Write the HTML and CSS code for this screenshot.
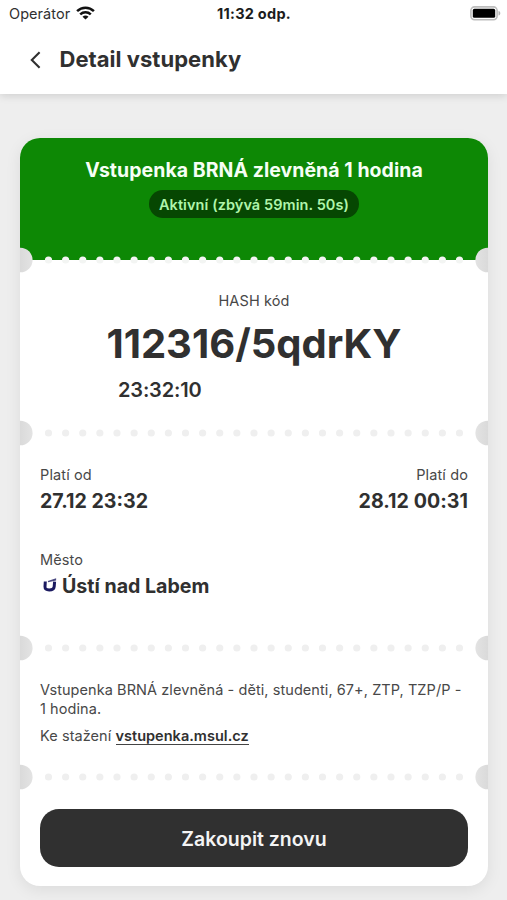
FILE: index.html
```html
<!DOCTYPE html>
<html lang="cs">
<head>
<meta charset="utf-8">
<title>Detail vstupenky</title>
<link rel="stylesheet" href="styles.css">
</head>
<body>
<svg class="defs" width="0" height="0" aria-hidden="true">
  <defs>
    <linearGradient id="shadeLeft"><stop offset="0.5" stop-color="#dadada"/><stop offset="1" stop-color="#e3e3e3"/></linearGradient>
    <linearGradient id="shadeRight"><stop offset="0" stop-color="#e3e3e3"/><stop offset="0.5" stop-color="#dadada"/></linearGradient>
    <symbol id="perforation" viewBox="0 0 468 26">
      <circle cx="0.3" cy="13" r="12.3" fill="url(#shadeLeft)"/>
      <circle cx="467.7" cy="13" r="12.3" fill="url(#shadeRight)"/>
      <path d="M28.500 13H440.500" fill="none" stroke="currentColor" stroke-width="7.2" stroke-linecap="round" stroke-dasharray="0 17.125"/>
    </symbol>
  </defs>
</svg>
<header class="top">
  <div class="status">
    <div class="carrier"><span>Operátor</span>
      <svg width="19" height="14" viewBox="0 0 19 14" fill="none" stroke="#111" stroke-width="2.5"><path d="M1.1 5.1C5.8.5 13.2.5 17.9 5.1"/><path d="M4.2 8.3c3-2.8 7.6-2.8 10.6 0"/><path d="M9.5 13.6 6.5 10.7c1.7-1.5 4.3-1.5 6 0z" fill="#111" stroke="none"/></svg>
    </div>
    <div class="clock">11:32 odp.</div>
    <svg class="battery" width="31" height="15" viewBox="0 0 31 15"><rect x=".9" y=".9" width="26.2" height="12.8" rx="3.6" fill="#fff" stroke="#bdbdbd" stroke-width="1.6"/><rect x="2.8" y="2.8" width="22.4" height="9" rx="1.6"/><path d="M28.5 5c2.4.5 2.4 4.1 0 4.6z" fill="#b4b4b4"/></svg>
  </div>
  <div class="titlebar">
    <svg width="12" height="18" viewBox="0 0 12 18" fill="none" stroke="#303030" stroke-width="2.1"><path d="M10.6 1.2 2.8 9l7.8 7.8"/></svg>
    <h1>Detail vstupenky</h1>
  </div>
</header>
<main>
  <article class="ticket">
    <section class="head">
      <h2>Vstupenka BRNÁ zlevněná 1 hodina</h2>
      <div class="badge">Aktivní (zbývá 59min. 50s)</div>
    </section>
    <section class="code">
      <svg class="perf perf-head"><use href="#perforation"/></svg>
      <div class="label hash-label">HASH kód</div>
      <div class="hash">112316/5qdrKY</div>
      <div class="time">23:32:10</div>
    </section>
    <section class="validity">
      <svg class="perf"><use href="#perforation"/></svg>
      <div class="range">
        <div><div class="label">Platí od</div><div class="value">27.12 23:32</div></div>
        <div class="right"><div class="label">Platí do</div><div class="value until">28.12 00:31</div></div>
      </div>
      <div class="label city-label">Město</div>
      <div class="city">
        <svg width="15" height="16" viewBox="0 0 15 16"><path d="M2.3 4.5 2 9.6C1.9 12 3.2 12.9 6.2 12.9S11 12 11.2 9.6L11.6 4.6" fill="none" stroke="#1b1a60" stroke-width="3"/><path d="M4.8 3.9 13.1 1.3V3.6L5.2 5.3z" fill="#4a4980"/></svg>
        <span class="value">Ústí nad Labem</span>
      </div>
    </section>
    <section class="info">
      <svg class="perf"><use href="#perforation"/></svg>
      <p class="desc">Vstupenka BRNÁ zlevněná - děti, studenti, 67+, ZTP, TZP/P -<br>1 hodina.</p>
      <p class="download">Ke stažení <a>vstupenka.msul.cz</a></p>
    </section>
    <section class="action">
      <svg class="perf"><use href="#perforation"/></svg>
      <button>Zakoupit znovu</button>
    </section>
  </article>
</main>
</body>
</html>
```
FILE: styles.css
```css
* { box-sizing: border-box; }
body {
  margin: 0;
  height: 900px;
  overflow: hidden;
  background: #eee;
  color: #303030;
  font-family: Inter, "Liberation Sans", sans-serif;
}
h1, h2, p { margin: 0; }
.defs { position: absolute; }
.top {
  height: 94px;
  background: #fff;
  box-shadow: 0 2px 8px rgba(0, 0, 0, .13);
}
.status {
  display: grid;
  grid-template-columns: 1fr auto 1fr;
  height: 28px;
  padding: 0 6px 0 9px;
  align-items: center;
  font-size: 14.5px;
}
.carrier { display: flex; gap: 6px; align-items: center; position: relative; top: -1px; letter-spacing: .05px; }
.clock { font-weight: 700; color: #1c1c1c; letter-spacing: .25px; position: relative; top: -.5px; left: -1px; }
.battery { justify-self: end; margin-top: -1px; }
.titlebar { display: flex; align-items: center; height: 62px; padding-left: 29px; gap: 18.5px; }
.titlebar svg { margin-top: 2px; }
h1 { font-size: 22px; line-height: 28px; font-weight: 700; letter-spacing: .03px; }
main { padding: 44px 19px 0 20px; }
.ticket {
  border-radius: 20px;
  background: #fff;
  box-shadow: 0 4px 16px rgba(0, 0, 0, .08);
}
.ticket section { position: relative; padding: 0 20px; }
.perf {
  position: absolute;
  left: 0;
  top: -13px;
  width: 468px;
  height: 26px;
  color: #efefef;
}
.perf-head { color: #f3f5f3; }
.head {
  height: 122px;
  background: #0d8805;
  border-radius: 20px 20px 0 0;
  display: flex;
  flex-direction: column;
  align-items: center;
}
h2 { margin-top: 20px; font-size: 19.5px; line-height: 24px; font-weight: 700; letter-spacing: .04px; color: #f6fff5; white-space: nowrap; }
.badge {
  margin-top: 8px;
  height: 28px;
  width: 210px;
  border-radius: 14px;
  background: #064702;
  color: #b0f5ab;
  font-size: 14.5px;
  line-height: 29px;
  font-weight: 600;
  letter-spacing: .08px;
  text-align: center;
  white-space: nowrap;
}
.code { height: 173px; }
.label { font-size: 14.5px; line-height: 20px; letter-spacing: .12px; color: #484848; }
.hash-label { text-align: center; padding-top: 31px; }
.hash { margin-top: 8px; font-size: 40px; line-height: 50px; font-weight: 700; text-align: center; white-space: nowrap; }
.time { margin: 9px 0 0 78px; font-size: 20px; line-height: 24px; font-weight: 600; letter-spacing: -.15px; }
.validity { height: 215px; }
.range { display: flex; justify-content: space-between; padding-top: 32px; }
.right { text-align: right; }
.value { font-size: 19.6px; line-height: 26px; font-weight: 700; margin-top: 3px; white-space: nowrap; }
.until { letter-spacing: .05px; }
.city-label { margin-top: 36px; }
.city { display: flex; align-items: center; gap: 4px; padding-left: 3px; }
.info { height: 129px; font-size: 14.5px; line-height: 18.5px; letter-spacing: .07px; color: #484848; }
.desc { padding-top: 33px; white-space: nowrap; }
.download { margin-top: 9px; }
.download a { font-weight: 600; color: #303030; border-bottom: 1px solid #444; letter-spacing: .02px; }
.action { height: 109px; }
.ticket .action { padding-top: 31.5px; }
button {
  display: block;
  width: 100%;
  height: 58.5px;
  padding: 2px 0 0;
  border: 0;
  border-radius: 19px;
  background: #303030;
  color: #f4f4f4;
  font: 600 19.5px/24px Inter, sans-serif;
}
```
